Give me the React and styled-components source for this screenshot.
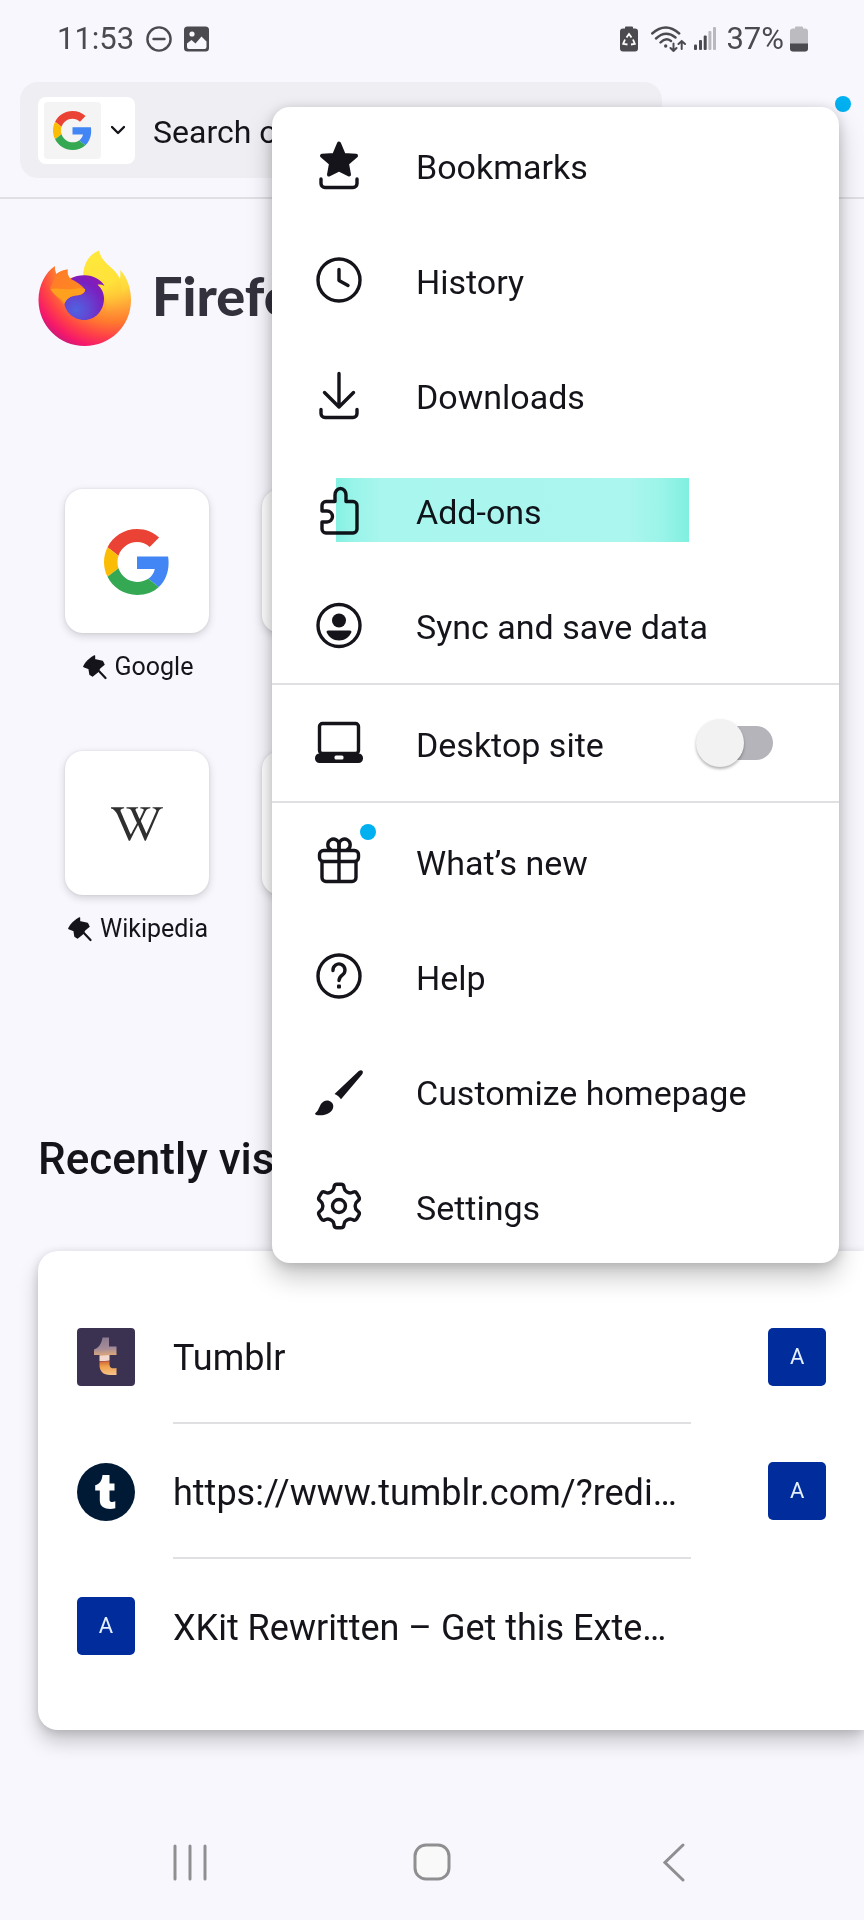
import React, { useState } from 'react';
import styled, { createGlobalStyle } from 'styled-components';
import { FaWikipediaW } from 'react-icons/fa';

const GlobalStyle = createGlobalStyle`
  * {
    box-sizing: border-box;
  }

  body {
    margin: 0;
    background-color: #F8F7FD;
    color: #15141A;
    font-family: Roboto, 'Liberation Sans', sans-serif;
    overflow-x: hidden;
  }

  button, input {
    font-family: inherit;
    color: inherit;
  }

  svg {
    display: block;
    flex: none;
  }
`;

const Screen = styled.div`
  position: relative;
  display: flex;
  flex-direction: column;
  min-height: 100vh;
  overflow: hidden;
`;

const StatusBar = styled.header`
  display: flex;
  align-items: center;
  justify-content: space-between;
  height: 77px;
  padding: 0 56px 0 57px;
  font-size: 31px;
  line-height: 38px;
  color: #4B4A4F;
`;

const StatusGroup = styled.div`
  display: flex;
  align-items: center;
  gap: ${props => props.$gap}px;
`;

const Toolbar = styled.div`
  display: flex;
  padding: 5px 13px 19px 20px;
  border-bottom: 2px solid #E0DFE3;
`;

const SearchBox = styled.div`
  display: flex;
  flex: 1;
  align-items: center;
  gap: 18px;
  min-width: 0;
  height: 96px;
  padding: 0 18px;
  border-radius: 18px;
  background-color: #EFEEF3;
`;

const EngineButton = styled.button`
  display: flex;
  flex: none;
  align-items: center;
  gap: 10px;
  height: 67px;
  padding: 0 10px 0 6px;
  border: 0;
  border-radius: 8px;
  background-color: #FFFFFF;
`;

const EngineLogo = styled.span`
  display: flex;
  align-items: center;
  justify-content: center;
  width: 57px;
  height: 57px;
  border-radius: 4px;
  background-color: #F4F4F5;
`;

const SearchInput = styled.input`
  flex: 1;
  min-width: 0;
  padding: 3px 0 0;
  border: 0;
  outline: 0;
  background: transparent;
  font-size: 32px;
  line-height: 40px;

  &::placeholder {
    color: #15141A;
    opacity: 1;
  }
`;

const MenuButton = styled.button`
  position: relative;
  width: 189px;
  padding: 0;
  border: 0;
  background: transparent;
`;

const Badge = styled.span`
  position: absolute;
  top: ${props => props.$top}px;
  right: ${props => props.$right}px;
  width: 16px;
  height: 16px;
  border-radius: 50%;
  background-color: #00B0F0;
`;

const Brand = styled.div`
  display: flex;
  align-items: center;
  gap: 20px;
  padding: 51px 38px 0;
`;

const BrandName = styled.h1`
  margin: 0;
  padding-bottom: 6px;
  font-family: Lato, 'Open Sans', sans-serif;
  font-size: 54px;
  line-height: 60px;
  font-weight: 900;
  color: #32313C;
`;

const TopSites = styled.div`
  display: grid;
  grid-template-columns: repeat(4, 1fr);
  row-gap: 69px;
  padding: 142px 38px 0;
`;

const Site = styled.a`
  display: flex;
  flex-direction: column;
  align-items: center;
  gap: 18px;
  color: inherit;
  text-decoration: none;
`;

const SiteTile = styled.span`
  display: flex;
  align-items: center;
  justify-content: center;
  width: 144px;
  height: 144px;
  padding-top: 2px;
  border-radius: 18px;
  background-color: #FFFFFF;
  color: #2F2F2F;
  box-shadow: 0 3px 8px rgba(0, 0, 0, 0.16), 0 0 3px rgba(0, 0, 0, 0.08);
`;

const SiteLabel = styled.span`
  display: flex;
  align-items: center;
  gap: 8px;
  height: 31px;
  padding: 1px 0 0 3px;
  font-size: 25px;
  line-height: 30px;
`;

const SectionTitle = styled.h2`
  margin: 190px 38px 67px;
  font-size: 44px;
  line-height: 50px;
  font-weight: 500;
  white-space: nowrap;
`;

const RecentCard = styled.div`
  display: flex;
  margin-left: 38px;
  padding: 38px 0;
  border-radius: 20px 0 0 20px;
  background-color: #FFFFFF;
  box-shadow: 0 12px 20px rgba(0, 0, 0, 0.2), 0 2px 10px rgba(0, 0, 0, 0.14);
  overflow: hidden;
`;

const RecentColumn = styled.div`
  flex: 0 0 80vw;
  padding: 0 38px 0 39px;
`;

const RecentRow = styled.a`
  display: flex;
  align-items: center;
  gap: 38px;
  height: 135px;
  color: inherit;
  text-decoration: none;

  &:last-child {
    height: 133px;
  }
`;

const RecentTitle = styled.span`
  flex: 1;
  min-width: 0;
  height: 100%;
  padding-top: 4px;
  border-bottom: ${props => props.$last ? 'none' : '2px solid #E0E0E2'};
  font-size: 36px;
  line-height: 130px;
  white-space: nowrap;
`;

const LetterIcon = styled.span`
  display: flex;
  flex: none;
  align-items: center;
  justify-content: center;
  width: 58px;
  height: 58px;
  border-radius: 5px;
  background-color: #002C9C;
  color: #E4F0FF;
  font-size: 22px;
  line-height: 26px;
`;

const NavBar = styled.nav`
  display: grid;
  grid-template-columns: repeat(3, 1fr);
  height: 116px;
  margin-top: auto;
  padding: 0 69px;
`;

const NavButton = styled.button`
  display: flex;
  align-items: center;
  justify-content: center;
  padding: 0;
  border: 0;
  background: transparent;
`;

const Menu = styled.div`
  position: absolute;
  top: 107px;
  right: 25px;
  width: calc(100% - 297px);
  border-radius: 18px;
  background-color: #FFFFFF;
  box-shadow: 0 14px 26px rgba(0, 0, 0, 0.22), 0 2px 12px rgba(0, 0, 0, 0.16);
`;

const MenuItem = styled.button`
  position: relative;
  display: flex;
  align-items: center;
  gap: 53px;
  width: 100%;
  height: 115px;
  padding: 0 66px 0 43px;
  border: 0;
  background: transparent;
  text-align: left;
`;

const MenuIcon = styled.span`
  position: relative;
  flex: none;
  width: 48px;
  height: 48px;
`;

const MenuLabel = styled.span`
  flex: 1;
  padding-top: 4px;
  font-size: 34px;
  line-height: 40px;
  white-space: nowrap;
`;

const MenuDivider = styled.hr`
  height: 2px;
  margin: 1px 0 0;
  border: 0;
  background-color: #E0E0E2;
`;

// marker stroke over the entry, a little darker at both ends
const Highlight = styled.span`
  position: absolute;
  top: 26px;
  bottom: 25px;
  left: 64px;
  right: 150px;
  background: linear-gradient(to right, #86F1E3 0%, #99F4E9 5%, #A9F6EE 13%, #ABF6EE 83%, #9BF4E9 92%, #7FF0E0 100%);
  mix-blend-mode: multiply;
`;

const Switch = styled.input`
  appearance: none;
  position: relative;
  flex: none;
  width: 77px;
  height: 48px;
  margin: 0;

  &::before {
    content: '';
    position: absolute;
    top: 7px;
    left: 4px;
    right: 0;
    height: 34px;
    border-radius: 17px;
    background-color: #B5B4BA;
  }

  &::after {
    content: '';
    position: absolute;
    top: 0;
    left: ${props => props.checked ? '29px' : '0'};
    width: 48px;
    height: 48px;
    border-radius: 50%;
    background-color: #F2F2F2;
    box-shadow: 0 2px 3px rgba(0, 0, 0, 0.3);
  }
`;

const GoogleLogo = ({ size }) => (
  <svg width={size} height={size} viewBox='0 0 48 48'>
    <path fill='#EA4335' d='M24 9.5c3.54 0 6.71 1.22 9.21 3.6l6.85-6.85C35.9 2.38 30.47 0 24 0 14.62 0 6.51 5.38 2.56 13.22l7.98 6.19C12.43 13.72 17.74 9.5 24 9.5z' />
    <path fill='#4285F4' d='M46.98 24.55c0-1.57-.15-3.09-.38-4.55H24v9.02h12.94c-.58 2.96-2.26 5.48-4.78 7.18l7.73 6c4.51-4.18 7.09-10.36 7.09-17.65z' />
    <path fill='#FBBC05' d='M10.53 28.59c-.48-1.45-.76-2.99-.76-4.59s.27-3.14.76-4.59l-7.98-6.19C.92 16.46 0 20.12 0 24c0 3.88.92 7.54 2.56 10.78l7.97-6.19z' />
    <path fill='#34A853' d='M24 48c6.48 0 11.93-2.13 15.89-5.81l-7.73-6c-2.15 1.45-4.92 2.3-8.16 2.3-6.26 0-11.57-4.22-13.47-9.91l-7.98 6.19C6.51 42.62 14.62 48 24 48z' />
  </svg>
);

const FirefoxLogo = () => (
  <svg width='94' height='97' viewBox='0 0 94 97'>
    <defs>
      <radialGradient id='ffBody' gradientUnits='userSpaceOnUse' cx='76' cy='12' r='94'>
        <stop offset='0' stopColor='#FFF04A' />
        <stop offset='0.3' stopColor='#FFD83C' />
        <stop offset='0.48' stopColor='#FFA436' />
        <stop offset='0.64' stopColor='#FF7A2E' />
        <stop offset='0.8' stopColor='#FF4048' />
        <stop offset='0.93' stopColor='#F5186A' />
        <stop offset='1' stopColor='#D01A78' />
      </radialGradient>
      <linearGradient id='ffFlame' x1='0' y1='0' x2='0.3' y2='1'>
        <stop offset='0' stopColor='#FFE93C' />
        <stop offset='0.6' stopColor='#FFE23A' />
        <stop offset='1' stopColor='#FFB02E' stopOpacity='0' />
      </linearGradient>
      <radialGradient id='ffGlobe' gradientUnits='userSpaceOnUse' cx='38' cy='60' r='38'>
        <stop offset='0' stopColor='#4F62E0' />
        <stop offset='0.35' stopColor='#6346D2' />
        <stop offset='0.75' stopColor='#7A1FC0' />
        <stop offset='1' stopColor='#8A1AB4' />
      </radialGradient>
      <linearGradient id='ffHead' x1='0' y1='0' x2='1' y2='0.6'>
        <stop offset='0' stopColor='#FF7A2A' />
        <stop offset='1' stopColor='#FF8A20' />
      </linearGradient>
    </defs>
    <path fill='url(#ffBody)' d='M17 16C16.800 19 17.400 21.500 18.500 24C21.500 21.300 25.500 20 29.700 19.500C29 22.500 29.800 25.200 31.500 28L45.500 26C45.500 14 51 4.500 61 .7C62.500 9 69 14 75 19.500C78.500 22.800 80.500 26 82 29C82.300 26 82.500 23 82.200 20C89 27 93 38 93 50C93 76 72.300 96 46.700 96C21 96 .5 75.500 .5 50C.5 36 7 22.500 17 16Z' />
    <path fill='url(#ffFlame)' d='M45.500 26C45.500 14 51 4.500 61 .7C62.500 9 69 14 75 19.500C84 28 87 44 80 60C76 68 70 71 66 72C70 60 70 48 62 38C57 31 52 27 45.500 26Z' />
    <path fill='url(#ffGlobe)' d='M33 28.500C37 26 42 25 47 25.200C55 25.500 63 29 66.500 36C63.500 34.500 61.500 34.300 59.500 34.800C64 38.500 66 43.500 66 48.500C66 60.500 57.500 70 46.200 70C35 70 26 61 26 50Z' />
    <path fill='url(#ffHead)' d='M18.500 24C21.500 21.300 25.500 20 29.700 19.500C29 22.500 29.800 25.200 32 28.500C38 31.500 43 34.500 47.200 39.500C47 43.500 43 45 38 45.500C32 46.500 27.500 49 26 55C22 50 16 44 12 38Z' />
    <path fill='#FFA01E' d='M12.300 39.300C20 36.800 29 40.500 38 38.800C41.500 38 44.500 38.300 47.200 39.500C46.500 43.500 43 45.200 38 45.300C32 46 28 49.500 26.500 53.500C24.500 48 19.500 47.500 16.500 44.500C14.500 42.500 13.500 41 12.300 39.300Z' />
  </svg>
);

const PinIcon = () => (
  <svg width='24' height='25' viewBox='0 0 24 25' fill='#15141A' stroke='#15141A' strokeLinecap='round' strokeLinejoin='round'>
    <path strokeWidth='1.400' d='M.8 11.500C2 8.500 7 3 11.500 .9L11.500 4.800L19.500 6.500L21 9.500L16.800 13L14.500 17L9.500 21L7 19.500L6 13.500Z' />
    <path strokeWidth='2.200' d='M14 14L22.500 23' />
  </svg>
);

const TUMBLR_T = 'M25.500 12H32.500V20.500H37.500V27.500H32.500V36.500C32.500 39.500 35.500 39.500 38.300 38.300V45.300C31 47 22.800 45.500 22.800 37.500V27.500H18.200V22.200C22.500 21 24.900 18 25.500 12Z';

const TumblrBadge = () => (
  <svg width='58' height='58' viewBox='0 0 58 58'>
    <circle cx='29' cy='29' r='29' fill='#001935' />
    <path d={TUMBLR_T} fill='#FFFFFF' />
  </svg>
);

const TumblrArt = () => (
  <svg width='58' height='58' viewBox='0 0 58 58'>
    <defs>
      <linearGradient id='tumblrArt' gradientUnits='userSpaceOnUse' x1='29' y1='9' x2='31' y2='48'>
        <stop offset='0' stopColor='#8C7A92' />
        <stop offset='0.3' stopColor='#A58C98' />
        <stop offset='0.46' stopColor='#D9A67C' />
        <stop offset='0.48' stopColor='#F3D8CF' />
        <stop offset='0.6' stopColor='#F3D8CF' />
        <stop offset='0.61' stopColor='#A54A4A' />
        <stop offset='0.65' stopColor='#D8763A' />
        <stop offset='0.75' stopColor='#F0A04C' />
        <stop offset='1' stopColor='#F8C890' />
      </linearGradient>
    </defs>
    <rect width='58' height='58' rx='4' fill='#3B3151' />
    <path fill='url(#tumblrArt)' d='M25.500 9.500H32V18.500H39.500V27H32.500V36.500C32.500 40.500 36 40.800 39.500 40V47H33C26 47 22.500 43 22.500 37V27H17V21.500C21.500 20 24.500 16 25.500 9.500Z' />
  </svg>
);

// six-tooth cog outline with its corners cut by short curves
const gearPath = () => {
  const points = [];
  for (let i = 0; i < 6; i++) {
    [[-19, 16.5], [-12, 22.3], [12, 22.3], [19, 16.5]].forEach(([offset, radius]) => {
      const angle = (i * 60 - 90 + offset) * Math.PI / 180;
      points.push([24 + radius * Math.cos(angle), 24 + radius * Math.sin(angle)]);
    });
  }
  return points.map((p, i) => {
    const prev = points[(i + points.length - 1) % points.length];
    const next = points[(i + 1) % points.length];
    const cut = (q) => {
      const length = Math.hypot(q[0] - p[0], q[1] - p[1]);
      const k = 2.6 / length;
      return `${p[0] + (q[0] - p[0]) * k} ${p[1] + (q[1] - p[1]) * k}`;
    };
    return `${i === 0 ? 'M' : 'L'}${cut(prev)}Q${p[0]} ${p[1]} ${cut(next)}`;
  }).join('') + 'Z';
};

const icons = {
  bookmarks: (
    <>
      <path fill='currentColor' strokeWidth='4' d='M24 2.500L28.800 14L41 14.800L32 22.500L34 33.500L24 28.500L14 33.500L16 22.500L7 14.800L19.200 14Z' />
      <path d='M6 38V42.500A4 4 0 0 0 10 46.500H38A4 4 0 0 0 42 42.500V38' />
    </>
  ),
  history: (
    <>
      <circle cx='24' cy='24' r='21' />
      <path d='M24 13.500V24.500L33 29.500' />
    </>
  ),
  downloads: (
    <>
      <path d='M24 2.500V36M9.500 21.500L24 36L38.500 21.500' />
      <path d='M6 38.500V42.500A4 4 0 0 0 10 46.500H38A4 4 0 0 0 42 42.500V38.500' />
    </>
  ),
  addons: (
    <path d='M11 15.500H20V9A5.500 6.500 0 0 1 31 9V15.500H38A4 4 0 0 1 42 19.500V43A4 4 0 0 1 38 47H11A4 4 0 0 1 7 43V36H12A5.500 5.500 0 0 0 12 25H7V19.500A4 4 0 0 1 11 15.500Z' />
  ),
  sync: (
    <>
      <circle cx='24' cy='24.500' r='21' />
      <circle cx='24' cy='19.500' r='7' fill='currentColor' stroke='none' />
      <path fill='currentColor' stroke='none' d='M11.500 31Q11.500 29.500 13 29.500H35Q36.500 29.500 36.500 31C34.500 36 29.500 39.500 24 39.500S13.500 36 11.500 31Z' />
    </>
  ),
  desktop: (
    <>
      <rect x='4.500' y='4.500' width='39' height='30' rx='3' />
      <rect x='0' y='34.500' width='48' height='9.500' rx='4.500' fill='currentColor' stroke='none' />
      <rect x='19.500' y='36.500' width='9' height='4' rx='1.500' fill='#FFFFFF' stroke='none' />
    </>
  ),
  whatsNew: (
    <>
      <path d='M24 13V7.500A5.600 5.600 0 1 0 15.500 12.500' />
      <path d='M24 13V7.500A5.600 5.600 0 1 1 32.500 12.500' />
      <rect x='4.500' y='13.500' width='39' height='11' rx='4' />
      <path d='M7 25V40.500A4 4 0 0 0 11 44.500H37A4 4 0 0 0 41 40.500V25M24 14V44' />
    </>
  ),
  help: (
    <>
      <circle cx='24' cy='24' r='21' />
      <path d='M18 18.500A6 6 0 1 1 27.500 22.800C25.500 24.300 24 25.500 24 28.500' />
      <rect x='22' y='32.500' width='4' height='4' rx='1' fill='currentColor' stroke='none' />
    </>
  ),
  customize: (
    <>
      <path fill='currentColor' stroke='none' d='M19.500 27L43.500 4.300C45 3 46.500 2.800 47.300 3.700C48.200 4.600 48 6 47 7.500L26 32.300C24.500 30 22.500 28 19.500 27Z' />
      <path fill='currentColor' stroke='none' d='M.5 46C4.500 43.500 4 37 9 34.300C13 32.200 18.500 35 18.300 39.500C18 46 9 49.500 1.500 48C0 47.600 -.3 46.500 .5 46Z' />
    </>
  ),
  settings: (
    <>
      <path d={gearPath()} />
      <circle cx='24' cy='24' r='6.500' />
    </>
  )
};

const Icon = ({ name }) => (
  <MenuIcon>
    <svg width='48' height='48' viewBox='0 0 48 48' overflow='visible' fill='none' stroke='currentColor' strokeWidth='3.400' strokeLinecap='round' strokeLinejoin='round'>
      {icons[name]}
    </svg>
    {name === 'whatsNew' && <Badge $top={-13} $right={-13} />}
  </MenuIcon>
);

const libraryItems = [
  { icon: 'bookmarks', label: 'Bookmarks' },
  { icon: 'history', label: 'History' },
  { icon: 'downloads', label: 'Downloads' },
  { icon: 'addons', label: 'Add-ons', highlighted: true },
  { icon: 'sync', label: 'Sync and save data' }
];

const appItems = [
  { icon: 'whatsNew', label: 'What’s new' },
  { icon: 'help', label: 'Help' },
  { icon: 'customize', label: 'Customize homepage' },
  { icon: 'settings', label: 'Settings' }
];

const sites = [
  { name: 'Google', logo: <GoogleLogo size={66} /> },
  {}, {}, {},
  { name: 'Wikipedia', logo: <FaWikipediaW size={52} /> },
  {}, {}, {}
];

const recents = [
  { title: 'Tumblr', icon: <TumblrArt /> },
  { title: 'https://www.tumblr.com/?redi…', icon: <TumblrBadge /> },
  { title: 'XKit Rewritten – Get this Exte…', icon: <LetterIcon>A</LetterIcon> }
];

const StatusIcons = () => (
  <StatusGroup $gap={6}>
    <svg width='25' height='26' viewBox='0 0 25 26'>
      <path fill='#4B4A4F' d='M5 2.500V1.500Q5 .5 6 .5H12Q13 .5 13 1.500V2.500H15Q18 2.500 18 5.500V22.500Q18 25.500 15 25.500H3Q0 25.500 0 22.500V5.500Q0 2.500 3 2.500Z' />
      <path fill='none' stroke='#FFFFFF' strokeWidth='1.800' d='M6.500 11.500L9 8L11.500 11.500M13 13.500L14.800 17.800L11 18.500M7.500 18.500L3.200 17.800L5 13.500' />
    </svg>
    <svg width='37' height='26' viewBox='0 0 37 26' fill='none' stroke='#4B4A4F' strokeWidth='2.400' strokeLinecap='round'>
      <path d='M1.200 7.500Q14.700 -4.500 28.200 7.500M5 12.500Q14.700 3.500 24.500 11.500M9.500 16.500Q14.700 11 20 15' />
      <circle cx='14.700' cy='20' r='1.700' fill='#4B4A4F' stroke='none' />
      <path strokeWidth='2' d='M22.500 17.500V25M19.500 22L22.500 25L25.500 22M30.700 23V15M27.500 18L30.700 15L34 18' />
    </svg>
    <svg width='26' height='25' viewBox='0 0 26 25' fill='#4B4A4F'>
      <rect x='0' y='18.500' width='3' height='5.500' rx='1' />
      <rect x='5' y='14' width='3' height='10' rx='1' />
      <rect x='9.700' y='9.500' width='3' height='14.500' rx='1' />
      <rect x='14.400' y='5' width='3' height='19' rx='1' fill='#B9B8BD' />
      <rect x='19' y='1' width='3' height='23' rx='1' fill='#B9B8BD' />
    </svg>
    <span>37%</span>
    <svg width='18' height='26' viewBox='0 0 18 26'>
      <path fill='#BCBBC0' d='M5 2.500V1.500Q5 .5 6 .5H12Q13 .5 13 1.500V2.500H15Q18 2.500 18 5.500V22.500Q18 25.500 15 25.500H3Q0 25.500 0 22.500V5.500Q0 2.500 3 2.500Z' />
      <path fill='#4B4A4F' d='M0 17.500H18V22.500Q18 25.500 15 25.500H3Q0 25.500 0 22.500Z' />
    </svg>
  </StatusGroup>
);

const App = () => {
  const [desktopSite, setDesktopSite] = useState(false);

  const renderItem = (item) => (
    <MenuItem key={item.label} type='button'>
      <Icon name={item.icon} />
      <MenuLabel>{item.label}</MenuLabel>
      {item.highlighted && <Highlight />}
    </MenuItem>
  );

  return (
    <Screen>
      <GlobalStyle />
      <StatusBar>
        <StatusGroup $gap={12}>
          <span>11:53</span>
          <svg width='26' height='26' viewBox='0 0 26 26' fill='none' stroke='#4B4A4F' strokeWidth='2.400'>
            <circle cx='13' cy='13' r='11.600' />
            <path strokeLinecap='round' d='M7.500 13H18.500' />
          </svg>
          <svg width='25' height='26' viewBox='0 0 25 26'>
            <rect y='.5' width='25' height='25' rx='3.500' fill='#4B4A4F' />
            <circle cx='8' cy='8' r='2.600' fill='#F8F7FD' />
            <path fill='#F8F7FD' d='M3 17.500L7.500 14L11.500 17.500L17.500 10.500L22.500 15.500V21Q22.500 23 20.500 23H5Q3 23 3 21Z' />
          </svg>
        </StatusGroup>
        <StatusIcons />
      </StatusBar>

      <Toolbar>
        <SearchBox>
          <EngineButton type='button' aria-label='Search engine'>
            <EngineLogo><GoogleLogo size={39} /></EngineLogo>
            <svg width='14' height='10' viewBox='0 0 14 10' fill='none' stroke='#15141A' strokeWidth='2.400' strokeLinecap='round' strokeLinejoin='round'>
              <path d='M1 2L7 8L13 2' />
            </svg>
          </EngineButton>
          <SearchInput type='text' aria-label='Search or enter address' placeholder='Search or enter address' />
        </SearchBox>
        <MenuButton type='button' aria-label='Menu'>
          <Badge $top={14} $right={0} />
        </MenuButton>
      </Toolbar>

      <Brand>
        <FirefoxLogo />
        <BrandName>Firefox</BrandName>
      </Brand>

      <TopSites>
        {sites.map((site, index) => (
          <Site key={index} href='#'>
            <SiteTile>{site.logo}</SiteTile>
            <SiteLabel>
              {site.name && <PinIcon />}
              {site.name}
            </SiteLabel>
          </Site>
        ))}
      </TopSites>

      <SectionTitle>Recently visited</SectionTitle>
      <RecentCard>
        <RecentColumn>
          {recents.map((recent, index) => (
            <RecentRow key={recent.title} href='#'>
              {recent.icon}
              <RecentTitle $last={index === recents.length - 1}>{recent.title}</RecentTitle>
            </RecentRow>
          ))}
        </RecentColumn>
        <RecentColumn>
          <RecentRow href='#'><LetterIcon>A</LetterIcon></RecentRow>
          <RecentRow href='#'><LetterIcon>A</LetterIcon></RecentRow>
        </RecentColumn>
      </RecentCard>

      <NavBar>
        <NavButton type='button' aria-label='Recent apps'>
          <svg width='34' height='37' viewBox='0 0 34 37' stroke='#8F8F92' strokeWidth='3' strokeLinecap='round'>
            <path d='M2 2V35M17 2V35M32 2V35' />
          </svg>
        </NavButton>
        <NavButton type='button' aria-label='Home'>
          <svg width='38' height='38' viewBox='0 0 38 38' fill='#F9F9F9' stroke='#8F8F92' strokeWidth='3'>
            <rect x='2' y='2' width='34' height='34' rx='11' />
          </svg>
        </NavButton>
        <NavButton type='button' aria-label='Back'>
          <svg width='22' height='39' viewBox='0 0 22 39' fill='none' stroke='#8F8F92' strokeWidth='3' strokeLinecap='round'>
            <path d='M20 2L2 19.500L20 37' />
          </svg>
        </NavButton>
      </NavBar>

      <Menu>
        {libraryItems.map(renderItem)}
        <MenuDivider />
        <MenuItem as='label'>
          <Icon name='desktop' />
          <MenuLabel>Desktop site</MenuLabel>
          <Switch
            type='checkbox'
            role='switch'
            checked={desktopSite}
            onChange={(event) => setDesktopSite(event.target.checked)}
          />
        </MenuItem>
        <MenuDivider />
        {appItems.map(renderItem)}
      </Menu>
    </Screen>
  );
};

export default App;
